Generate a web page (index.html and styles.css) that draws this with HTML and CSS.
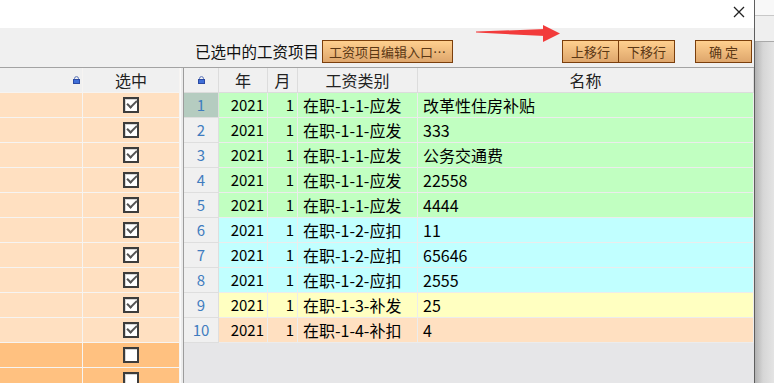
FILE: index.html
```html
<!DOCTYPE html>
<html>
  <head>
    <link rel="stylesheet" href="styles.css">
  </head>
  <body>
    <div class="screen">
      <div class="dialog">
        <div class="titlebar">
          <svg class="close" viewBox="0 0 12 12" width="12" height="12">
            <path d="M1 1L11 11M11 1L1 11" stroke="#222" stroke-width="1.3" fill="none" />
          </svg>
        </div>
        <div class="toolbar">
          <span class="caption">已选中的工资项目</span>
          <button class="btn btn-edit">工资项目编辑入口…</button>
          <div class="spacer"></div>
          <button class="btn btn-move">上移行</button>
          <button class="btn btn-move">下移行</button>
          <button class="btn btn-ok">确 定</button>
        </div>
        <div class="grids">
          <div class="grid-left">
            <div class="lrow head">
              <div class="cell lock-cell">
                <svg class="lock" viewBox="0 0 7 8" width="7" height="8"><path d="M1.5 4V2.6a2 2 0 0 1 4 0V4" fill="none" stroke="#5b74b8" /><rect x="0.5" y="3.5" width="6" height="4" fill="#3f6fd8" stroke="#2b4aa3" /></svg>
              </div>
              <div class="cell">选中</div>
            </div>
            <div class="lrow"><div class="cell"></div><div class="cell"><span class="box on"></span></div></div>
            <div class="lrow"><div class="cell"></div><div class="cell"><span class="box on"></span></div></div>
            <div class="lrow"><div class="cell"></div><div class="cell"><span class="box on"></span></div></div>
            <div class="lrow"><div class="cell"></div><div class="cell"><span class="box on"></span></div></div>
            <div class="lrow"><div class="cell"></div><div class="cell"><span class="box on"></span></div></div>
            <div class="lrow"><div class="cell"></div><div class="cell"><span class="box on"></span></div></div>
            <div class="lrow"><div class="cell"></div><div class="cell"><span class="box on"></span></div></div>
            <div class="lrow"><div class="cell"></div><div class="cell"><span class="box on"></span></div></div>
            <div class="lrow"><div class="cell"></div><div class="cell"><span class="box on"></span></div></div>
            <div class="lrow"><div class="cell"></div><div class="cell"><span class="box on"></span></div></div>
            <div class="lrow open"><div class="cell"></div><div class="cell"><span class="box"></span></div></div>
            <div class="lrow open"><div class="cell"></div><div class="cell"><span class="box"></span></div></div>
          </div>
          <div class="grid-right">
            <div class="rrow head">
              <div class="cell">
                <svg class="lock" viewBox="0 0 7 8" width="7" height="8"><path d="M1.5 4V2.6a2 2 0 0 1 4 0V4" fill="none" stroke="#5b74b8" /><rect x="0.5" y="3.5" width="6" height="4" fill="#3f6fd8" stroke="#2b4aa3" /></svg>
              </div>
              <div class="cell">年</div>
              <div class="cell">月</div>
              <div class="cell">工资类别</div>
              <div class="cell">名称</div>
            </div>
            <div class="rrow green current"><div class="cell rh">1</div><div class="cell num">2021</div><div class="cell num">1</div><div class="cell txt">在职-1-1-应发</div><div class="cell txt">改革性住房补贴</div></div>
            <div class="rrow green"><div class="cell rh">2</div><div class="cell num">2021</div><div class="cell num">1</div><div class="cell txt">在职-1-1-应发</div><div class="cell txt">333</div></div>
            <div class="rrow green"><div class="cell rh">3</div><div class="cell num">2021</div><div class="cell num">1</div><div class="cell txt">在职-1-1-应发</div><div class="cell txt">公务交通费</div></div>
            <div class="rrow green"><div class="cell rh">4</div><div class="cell num">2021</div><div class="cell num">1</div><div class="cell txt">在职-1-1-应发</div><div class="cell txt">22558</div></div>
            <div class="rrow green"><div class="cell rh">5</div><div class="cell num">2021</div><div class="cell num">1</div><div class="cell txt">在职-1-1-应发</div><div class="cell txt">4444</div></div>
            <div class="rrow cyan"><div class="cell rh">6</div><div class="cell num">2021</div><div class="cell num">1</div><div class="cell txt">在职-1-2-应扣</div><div class="cell txt">11</div></div>
            <div class="rrow cyan"><div class="cell rh">7</div><div class="cell num">2021</div><div class="cell num">1</div><div class="cell txt">在职-1-2-应扣</div><div class="cell txt">65646</div></div>
            <div class="rrow cyan"><div class="cell rh">8</div><div class="cell num">2021</div><div class="cell num">1</div><div class="cell txt">在职-1-2-应扣</div><div class="cell txt">2555</div></div>
            <div class="rrow yellow"><div class="cell rh">9</div><div class="cell num">2021</div><div class="cell num">1</div><div class="cell txt">在职-1-3-补发</div><div class="cell txt">25</div></div>
            <div class="rrow peach"><div class="cell rh">10</div><div class="cell num">2021</div><div class="cell num">1</div><div class="cell txt">在职-1-4-补扣</div><div class="cell txt">4</div></div>
          </div>
        </div>
        <svg class="arrow" viewBox="0 0 90 24" width="90" height="24">
          <polygon points="2,9.6 71,7 71,14 2,10.6" fill="#f23b3b" />
          <polygon points="69,3 86,11.5 69,20" fill="#f23b3b" />
        </svg>
      </div>
      <div class="backdrop">
        <div class="bd-top"></div>
        <div class="bd-mid"></div>
        <div class="bd-rest"></div>
      </div>
    </div>
  </body>
</html>
```

FILE: styles.css
```css
* {
  box-sizing: border-box;
}
body {
  margin: 0;
  background-color: #e2e2e2;
  font-family: "Noto Sans CJK SC", "Noto Sans", sans-serif;
  overflow: hidden;
}
.screen {
  display: flex;
  width: 774px;
  height: 383px;
  overflow: hidden;
}
.dialog {
  position: relative;
  flex: none;
  width: 755px;
  display: flex;
  flex-direction: column;
  background-color: #fff;
  border-right: 1px solid #5e5e5e;
}
.titlebar {
  height: 28px;
  display: flex;
  justify-content: flex-end;
  align-items: flex-start;
}
.close {
  margin: 6px 9px 0 0;
}
.toolbar {
  height: 39px;
  display: flex;
  align-items: flex-end;
  padding: 0 2px 4px 195px;
  background-color: #f0f0f0;
}
.caption {
  font-size: 15.5px;
  line-height: 23px;
  color: #111;
  margin-right: 3px;
  white-space: nowrap;
}
.btn {
  height: 23px;
  padding: 0;
  border: 1px solid #7b3f0c;
  background: linear-gradient(#ffd08f, #dea66c);
  color: #5b3714;
  font: 13px/21px "Noto Sans CJK SC", sans-serif;
  white-space: nowrap;
}
.btn-edit {
  width: 131px;
}
.spacer {
  flex: 1;
}
.btn-move {
  width: 57px;
}
.btn-move + .btn-move {
  margin-left: -1px;
}
.btn-ok {
  width: 57px;
  margin-left: 20px;
}
.grids {
  flex: 1;
  min-height: 0;
  display: flex;
  background-color: #ececec;
  border-top: 1px solid #a3a3a3;
}
.cell {
  display: flex;
  align-items: center;
  justify-content: center;
  border-right: 1px solid #ececec;
  border-bottom: 1px solid #ececec;
  font-size: 15px;
  line-height: 24px;
  color: #000;
  overflow: hidden;
  white-space: nowrap;
}
.head .cell {
  background-color: #f0f0f0;
  border-color: #dcdcdc;
  font-size: 16px;
  color: #222;
}
.grid-left {
  width: 181px;
  margin-right: 2px;
  border-right: 1px solid #fafafa;
  overflow: hidden;
}
.lrow {
  display: grid;
  grid-template-columns: 83px 97px;
  height: 25px;
  background-color: #ffe0c1;
}
.lrow .cell {
  border-color: #f6f4f2;
}
.lrow.open {
  background-color: #ffc180;
}
.lock-cell {
  justify-content: flex-end;
  padding-right: 2px;
}
.box {
  position: relative;
  width: 16px;
  height: 16px;
  border: 2px solid #3c3c3c;
  background-color: #fff;
  box-shadow: inset 1px 1px 0 #d6d6d6;
}
.box.on::after {
  content: '';
  position: absolute;
  left: 2px;
  top: 1px;
  width: 8px;
  height: 4px;
  border-left: 2px solid #555;
  border-bottom: 2px solid #555;
  transform: rotate(-45deg);
}
.grid-right {
  flex: 1;
  background-color: #e6e6e8;
  border-left: 1px solid #9c9c9c;
}
.rrow {
  display: grid;
  grid-template-columns: 35px 49px 30px 120px 1fr;
  height: 25px;
}
.green {
  background-color: #c1ffc1;
}
.cyan {
  background-color: #c1ffff;
}
.yellow {
  background-color: #ffffc1;
}
.peach {
  background-color: #ffe0c1;
}
.rh {
  background-color: #f0f0f0;
  border-color: #dedede;
  color: #3f7cbf;
}
.current .rh {
  background-color: #b5ccc0;
}
.num {
  justify-content: flex-end;
  padding-right: 3px;
}
.txt {
  justify-content: flex-start;
  padding-left: 5px;
  font-size: 16px;
}
.arrow {
  position: absolute;
  left: 474px;
  top: 22px;
}
.backdrop {
  flex: 1;
  display: flex;
  flex-direction: column;
}
.bd-top {
  height: 16px;
  background-color: #f8f8f8;
  border-bottom: 1px solid #c8c8c8;
}
.bd-mid {
  height: 26px;
  background-color: #efefef;
  border-bottom: 1px solid #a9a9a9;
}
.bd-rest {
  flex: 1;
  background: linear-gradient(to right, #b2b2b2, #d6d6d6 8px, #e4e4e4);
}
```
